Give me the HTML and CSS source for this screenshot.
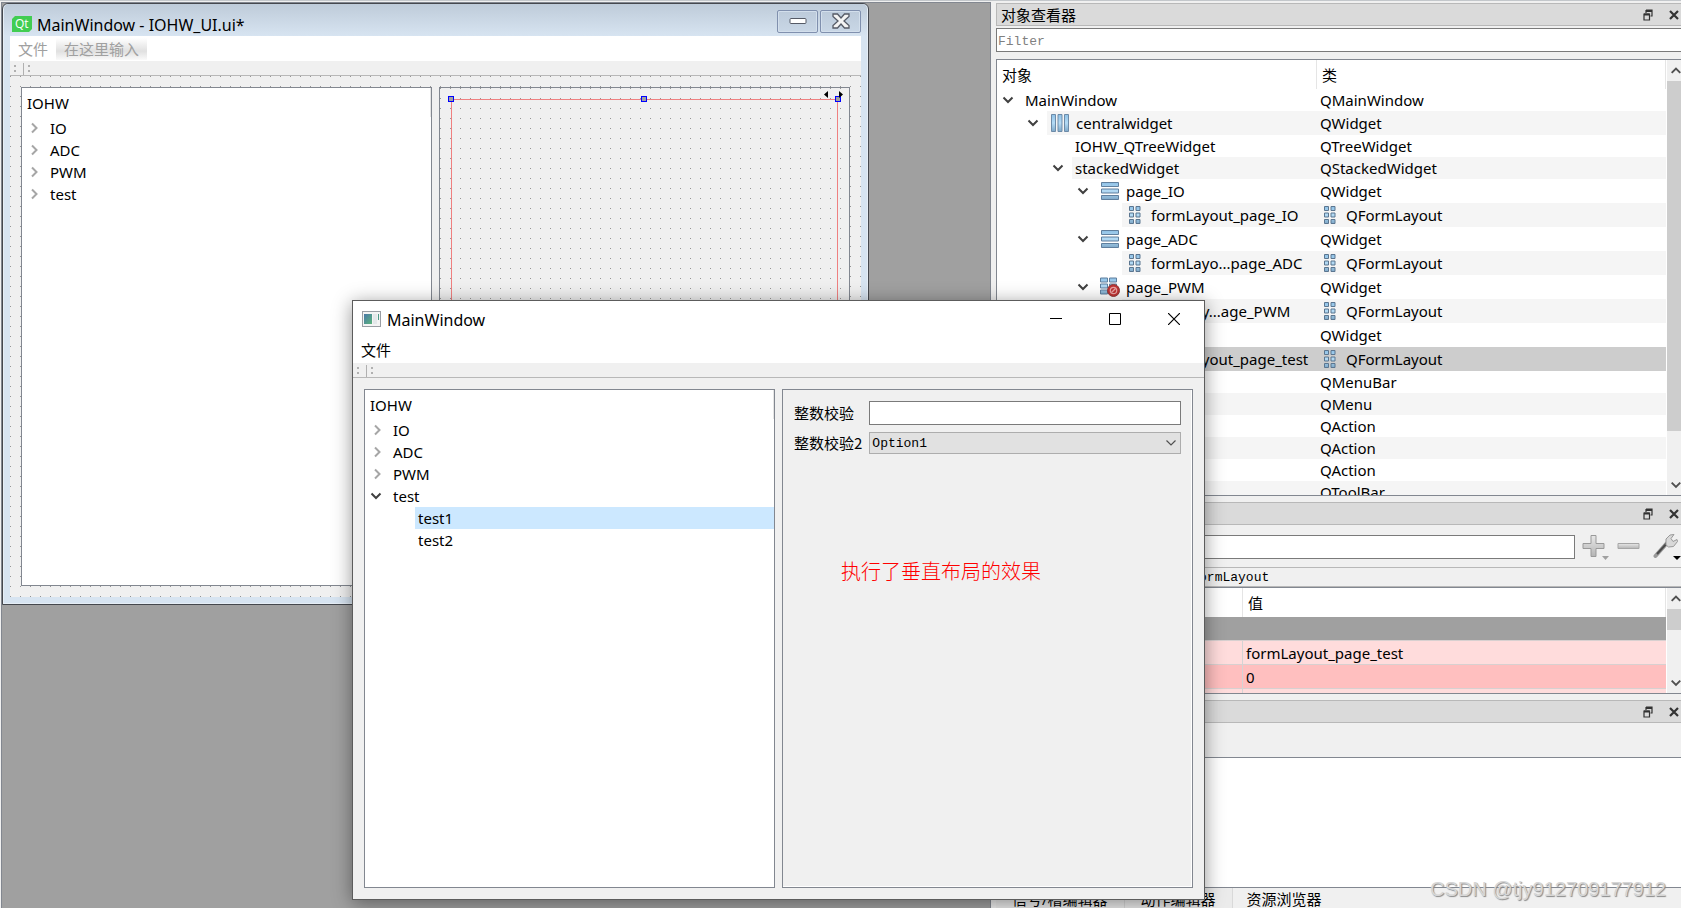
FILE: index.html
```html
<!DOCTYPE html>
<html lang="zh-CN">
<head>
<meta charset="utf-8">
<title>Qt Designer</title>
<link rel="stylesheet" href="styles.css">
</head>
<body>
<svg class="defs" aria-hidden="true">
  <defs>
    <linearGradient id="blue" x1="0" y1="0" x2="0" y2="1"><stop offset="0" stop-color="#8fc1e6"/><stop offset=".5" stop-color="#b4dbf5"/><stop offset="1" stop-color="#7fa9c9"/></linearGradient>
    <linearGradient id="metal" x1="0" y1="0" x2="0" y2="1"><stop offset="0" stop-color="#e8e8e8"/><stop offset="1" stop-color="#b4b4b4"/></linearGradient>
    <symbol id="down" viewBox="0 0 12 8"><path d="M1.5 1.5 6 6l4.500-4.500" fill="none" stroke="#404040" stroke-width="2"/></symbol>
    <symbol id="right" viewBox="0 0 8 12"><path d="M1.500 1.500 6 6l-4.500 4.500" fill="none" stroke="#a6a6a6" stroke-width="2"/></symbol>
    <symbol id="sup" viewBox="0 0 17 22"><path d="M4.500 13.500 9 9l4.500 4.500" fill="none" stroke="#505050" stroke-width="2"/></symbol>
    <symbol id="sdown" viewBox="0 0 17 22"><path d="M4.500 9 9 13.500 13.500 9" fill="none" stroke="#505050" stroke-width="2"/></symbol>
    <symbol id="float" viewBox="0 0 10 12"><path d="M3 1h6v6H7.500M3 1v3" fill="none" stroke="#333" stroke-width="1.200"/><path d="M3 1h6v2H3zM1 4.500h5.500v2H1z" fill="#333"/><path d="M1 5h5.500v6H1z" fill="none" stroke="#333" stroke-width="1.200"/></symbol>
    <symbol id="cross" viewBox="0 0 10 10"><path d="M1 1l8 8M9 1 1 9" stroke="#333" stroke-width="2.200"/></symbol>
    <symbol id="hlay" viewBox="0 0 20 20"><g fill="url(#blue)" stroke="#6d8ba8"><path d="M1.500 1.500h4v17h-4zM8 1.500h4v17H8zM14.500 1.500h4v17h-4z"/></g></symbol>
    <symbol id="vlay" viewBox="0 0 20 20"><g fill="url(#blue)" stroke="#5f7f9e"><path d="M1.500 1.500h17v4h-17zM1.500 8h17v4h-17zM1.500 14.500h17v4h-17z"/></g></symbol>
    <symbol id="form" viewBox="0 0 20 20"><g fill="url(#blue)" stroke="#5b7690"><path d="M4.500 1.500h4v4h-4zM11 1.500h4v4h-4zM4.500 8h4v4h-4zM11 8h4v4h-4zM4.500 14.500h4v4h-4zM11 14.500h4v4h-4z"/></g></symbol>
    <symbol id="broken" viewBox="0 0 20 20"><g fill="url(#blue)" stroke="#5f7f9e"><path d="M.5 1h7v4h-7zM9.500 1h7v4h-7zM.5 7h7v4h-7zM9.500 7h7v4h-7zM.5 13h7v4h-7z"/></g><circle cx="13.500" cy="13.500" r="6" fill="#c03434" stroke="#8f3b3b"/><circle cx="13.500" cy="13.500" r="3.200" fill="none" stroke="#e9a5a5" stroke-width="1.200"/><path d="m11.500 15.500 4-4" stroke="#e9a5a5" stroke-width="1.200"/></symbol>
  </defs>
</svg>

<div class="app">
  <main class="mdi">
    <section class="sub" aria-label="IOHW_UI.ui">
      <header class="sub-title">
        <svg class="qt" viewBox="0 0 20 16"><path d="M3 0h17v13l-3 3H0V3z" fill="#41cd52"/><text x="3" y="12" fill="#fff" font-size="12" font-family="Open Sans, sans-serif">Qt</text></svg>
        <h1>MainWindow - IOHW_UI.ui*</h1>
        <button class="glass" aria-label="Minimize"><svg width="18" height="8"><rect x="1" y="1.500" width="16" height="5" rx="1" fill="#fff" stroke="#555a66"/></svg></button>
        <button class="glass" aria-label="Close"><svg width="18" height="16" viewBox="0 0 18 16"><path d="M1 1h4.500L9 5l3.500-4H17v2.500L12 8l5 4.500V15h-4.500L9 11l-3.500 4H1v-2.500L6 8 1 3.500z" fill="#f4f4f4" stroke="#555a66" stroke-width="1.300"/></svg></button>
      </header>
      <div class="sub-body">
        <nav class="menubar dim"><button>文件</button><button class="type-here">在这里输入</button></nav>
        <div class="toolbar"><i class="grip"></i><i class="grip second"></i></div>
        <div class="central dots">
          <div class="tree">
            <div class="tree-head">IOHW</div>
            <ul>
              <li><svg class="br"><use href="#right"/></svg>IO</li>
              <li><svg class="br"><use href="#right"/></svg>ADC</li>
              <li><svg class="br"><use href="#right"/></svg>PWM</li>
              <li><svg class="br"><use href="#right"/></svg>test</li>
            </ul>
          </div>
          <div class="stack dots">
            <div class="layout-frame"><i class="handle l"></i><i class="handle c"></i><i class="handle r"></i>
              <svg class="pager" viewBox="0 0 19 7"><path d="M4 0v7L0 3.500zM15 0v7l4-3.500z"/></svg></div>
          </div>
        </div>
      </div>
    </section>
  </main>

  <aside class="docks">
    <section class="dock inspector">
      <header class="dock-title"><h2>对象查看器</h2><button aria-label="Float"><svg width="10" height="12"><use href="#float"/></svg></button><button aria-label="Close"><svg width="10" height="10"><use href="#cross"/></svg></button></header>
      <input class="filter" aria-label="Filter" placeholder="Filter">
      <div class="view">
        <div class="view-main">
          <table class="objects">
            <thead><tr><th>对象</th><th>类</th></tr></thead>
            <tbody>
              <tr><td><div class="node"><span class="b d0"><svg><use href="#down"/></svg></span><span class="n">MainWindow</span></div></td><td><span class="n">QMainWindow</span></td></tr>
              <tr class="big"><td><div class="node"><span class="b d1"><svg><use href="#down"/></svg></span><span class="n"><svg><use href="#hlay"/></svg>centralwidget</span></div></td><td><span class="n">QWidget</span></td></tr>
              <tr><td><div class="node"><span class="b d2"></span><span class="n">IOHW_QTreeWidget</span></div></td><td><span class="n">QTreeWidget</span></td></tr>
              <tr><td><div class="node"><span class="b d2"><svg><use href="#down"/></svg></span><span class="n">stackedWidget</span></div></td><td><span class="n">QStackedWidget</span></td></tr>
              <tr class="big"><td><div class="node"><span class="b d3"><svg><use href="#down"/></svg></span><span class="n"><svg><use href="#vlay"/></svg>page_IO</span></div></td><td><span class="n">QWidget</span></td></tr>
              <tr class="big"><td><div class="node"><span class="b d4"></span><span class="n"><svg><use href="#form"/></svg>formLayout_page_IO</span></div></td><td><span class="n"><svg><use href="#form"/></svg>QFormLayout</span></td></tr>
              <tr class="big"><td><div class="node"><span class="b d3"><svg><use href="#down"/></svg></span><span class="n"><svg><use href="#vlay"/></svg>page_ADC</span></div></td><td><span class="n">QWidget</span></td></tr>
              <tr class="big"><td><div class="node"><span class="b d4"></span><span class="n"><svg><use href="#form"/></svg>formLayo...page_ADC</span></div></td><td><span class="n"><svg><use href="#form"/></svg>QFormLayout</span></td></tr>
              <tr class="big"><td><div class="node"><span class="b d3"><svg><use href="#down"/></svg></span><span class="n"><svg><use href="#broken"/></svg>page_PWM</span></div></td><td><span class="n">QWidget</span></td></tr>
              <tr class="big"><td><div class="node"><span class="b d4"></span><span class="n"><svg><use href="#form"/></svg>formLay...age_PWM</span></div></td><td><span class="n"><svg><use href="#form"/></svg>QFormLayout</span></td></tr>
              <tr class="big"><td></td><td><span class="n">QWidget</span></td></tr>
              <tr class="big selected"><td><div class="node"><span class="b d4"></span><span class="n"><svg><use href="#form"/></svg>formLayout_page_test</span></div></td><td><span class="n"><svg><use href="#form"/></svg>QFormLayout</span></td></tr>
              <tr><td></td><td><span class="n">QMenuBar</span></td></tr>
              <tr><td><div class="node"><span class="b d2"></span><span class="n"></span></div></td><td><span class="n">QMenu</span></td></tr>
              <tr><td></td><td><span class="n">QAction</span></td></tr>
              <tr><td><div class="node"><span class="b d2"></span><span class="n"></span></div></td><td><span class="n">QAction</span></td></tr>
              <tr><td></td><td><span class="n">QAction</span></td></tr>
              <tr><td><div class="node"><span class="b d2"></span><span class="n"></span></div></td><td><span class="n">QToolBar</span></td></tr>
            </tbody>
          </table>
        </div>
        <div class="scroll"><svg><use href="#sup"/></svg><div class="track"><div class="thumb tall"></div></div><svg><use href="#sdown"/></svg></div>
      </div>
    </section>

    <section class="dock props">
      <header class="dock-title"><h2></h2><button aria-label="Float"><svg width="10" height="12"><use href="#float"/></svg></button><button aria-label="Close"><svg width="10" height="10"><use href="#cross"/></svg></button></header>
      <div class="prop-tools">
        <input class="filter closed" aria-label="Property filter">
        <button aria-label="Add"><svg width="28" height="26" viewBox="0 0 28 26"><path d="M9 1.500h5v8h8v5h-8v8H9v-8H1v-5h8z" fill="url(#metal)" stroke="#999"/><path d="M20 22h7l-3.500 4z" fill="#a0a0a0"/></svg></button>
        <button aria-label="Remove"><svg width="24" height="26" viewBox="0 0 24 26"><path d="M1 9.500h21v5H1z" fill="url(#metal)" stroke="#a6a6a6"/></svg></button>
        <button aria-label="Configure"><svg width="28" height="26" viewBox="0 0 28 26"><path d="M2.500 22 14 9" stroke="#999" stroke-width="4" stroke-linecap="round"/><path d="M4 20 14 9" stroke="#4a4a4a" stroke-width="2"/><path d="M13 11 13 5l4-4 4-.500-3 4 2 3 4-2 .500 2-4 5-5 .500z" fill="#d8d8d8" stroke="#999"/><path d="M20 22h8l-4 4z"/></svg></button>
      </div>
      <div class="prop-object">formLayout_page_test : QFormLayout</div>
      <div class="view">
        <div class="view-main">
          <table class="values">
            <thead><tr><th></th><th>值</th></tr></thead>
            <tbody>
              <tr class="group"><td colspan="2"></td></tr>
              <tr class="pale"><td></td><td>formLayout_page_test</td></tr>
              <tr class="pink"><td></td><td>0</td></tr>
              <tr class="pale"><td></td><td></td></tr>
            </tbody>
          </table>
        </div>
        <div class="scroll"><svg><use href="#sup"/></svg><div class="track"><div class="thumb short"></div></div><svg><use href="#sdown"/></svg></div>
      </div>
    </section>

    <section class="dock resources">
      <header class="dock-title"><h2></h2><button aria-label="Float"><svg width="10" height="12"><use href="#float"/></svg></button><button aria-label="Close"><svg width="10" height="10"><use href="#cross"/></svg></button></header>
      <div class="res-view"></div>
    </section>
    <nav class="tabs"><button>信号/槽编辑器</button><button>动作编辑器</button><button class="on">资源浏览器</button></nav>
  </aside>
</div>

<section class="win" aria-label="MainWindow">
  <header class="win-title">
    <svg class="appicon" viewBox="0 0 19 16"><defs><linearGradient id="ag" x1="0" y1="0" x2="1" y2="1"><stop offset="0" stop-color="#4a78a8"/><stop offset="1" stop-color="#5cb57c"/></linearGradient></defs><rect x=".5" y=".5" width="18" height="15" fill="#f4f4f4" stroke="#9a9ea4"/><rect x="2" y="3" width="8" height="10" fill="url(#ag)"/><rect x="11" y="3" width="4" height="10" fill="#e4e8ea"/><rect x="16" y="3" width="1" height="6" fill="#4f9a88"/></svg>
    <h1>MainWindow</h1>
    <button aria-label="Minimize"><svg width="12" height="12"><path d="M0 5.500h12" stroke="#000"/></svg></button>
    <button aria-label="Maximize"><svg width="12" height="12"><path d="M.5.5h11v11H.5z" fill="none" stroke="#000"/></svg></button>
    <button aria-label="Close"><svg width="12" height="12"><path d="m0 0 12 12M12 0 0 12" stroke="#000" stroke-width="1.200"/></svg></button>
  </header>
  <nav class="menubar"><button>文件</button></nav>
  <div class="toolbar"><i class="grip"></i><i class="grip second"></i></div>
  <div class="central">
    <div class="tree">
      <div class="tree-head">IOHW</div>
      <ul>
        <li><svg class="br"><use href="#right"/></svg>IO</li>
        <li><svg class="br"><use href="#right"/></svg>ADC</li>
        <li><svg class="br"><use href="#right"/></svg>PWM</li>
        <li><svg class="br open"><use href="#down"/></svg>test</li>
        <li class="child current">test1</li>
        <li class="child">test2</li>
      </ul>
    </div>
    <div class="stack page">
      <form class="form">
        <label for="v1">整数校验</label><input id="v1" type="text">
        <label for="v2">整数校验2</label>
        <div class="combo"><select id="v2"><option>Option1</option></select><svg viewBox="0 0 10 6"><path d="m.5.5 4.500 4.500L9.500.5" fill="none" stroke="#505050" stroke-width="1.200"/></svg></div>
      </form>
      <p class="note">执行了垂直布局的效果</p>
    </div>
  </div>
</section>
<div class="mark">CSDN @tjy912709177912</div>
</body>
</html>
```
FILE: styles.css
```css
* { box-sizing: border-box; }
html, body { height: 100%; }
body {
  margin: 0;
  overflow: hidden;
  background: #f0f0f0;
  color: #000;
  font: 15px/22px "Noto Sans", "Noto Sans CJK SC", sans-serif;
}
h1, h2, ul, p { margin: 0; padding: 0; font-size: inherit; font-weight: 400; }
ul { list-style: none; }
button { margin: 0; padding: 0; border: 0; background: none; color: inherit; font: inherit; }
svg { display: block; flex: none; }
.defs { position: absolute; width: 0; height: 0; }

.app { display: grid; grid-template-columns: minmax(0, 1fr) 685px; gap: 5px; height: 100%; border-top: 1px solid #c3c7cb; }

/* MDI area */
.mdi { position: relative; margin: 1px 0 0 1px; border: 1px solid #828790; border-bottom: 0; background: #a0a0a0; }
.sub {
  position: absolute; left: 0; top: 0; width: 867px; height: 602px;
  display: flex; flex-direction: column; padding: 0 7px 7px;
  border: 1px solid #45484e; border-radius: 6px 6px 0 0;
  background: #d7e4f1;
  box-shadow: inset 0 0 0 1px #e6eef6;
}
.sub-title { display: flex; align-items: center; gap: 2px; height: 32px; margin: 0 -6px; padding: 0 6px 0 7px; background: linear-gradient(#becbd9, #d7e4f1); border-radius: 5px 5px 0 0; }
.sub-title h1 { flex: 1; padding-top: 9px; font-size: 16px; }
.qt { width: 20px; height: 16px; margin: 7px 3px 0 1px; }
.glass { display: grid; place-items: center; width: 41px; height: 23px; margin-top: 2px; border: 1px solid #8090ae; border-radius: 2px; box-shadow: inset 0 0 0 1px #d3dfec; background: linear-gradient(#bccada, #c9d7e6); }
.sub-body { flex: 1; display: flex; flex-direction: column; background: #f0f0f0; }

.menubar { display: flex; align-items: center; height: 26px; padding: 0 4px; background: #fff; border-bottom: 1px solid #f0f0f0; }
.menubar button { padding: 0 4px; }
.dim { color: #a0a0a0; }
.type-here.type-here { margin-left: 4px; padding: 0 8px; background: linear-gradient(#fff, #e0e0e0 60%, #fafafa); }
.toolbar { display: flex; align-items: center; height: 14px; border-bottom: 1px solid #b8b8b8; background: #f0f0f0; }
.grip { width: 13px; height: 12px; background: linear-gradient(#b0b0b0, #b0b0b0) 4px 2px / 2px 2px no-repeat, linear-gradient(#b0b0b0, #b0b0b0) 4px 7px / 2px 2px no-repeat; }
.second { border-left: 1px solid #b0b0b0; }

.central { flex: 1; display: grid; grid-template-columns: 1fr 1fr; gap: 7px; padding: 11px; background-color: #f0f0f0; }
.dots { background: conic-gradient(from 0deg at 1px 1px, #f0f0f0 270deg, #969696 0) 0 0 / 10px 10px; }
.tree { border: 1px solid #828790; background: #fff; }
.tree-head { height: 29px; padding: 4px 5px; border-right: 1px solid #e5e5e5; }
.tree li { display: flex; align-items: center; height: 22px; padding-left: 5px; }
.br { width: 15px; height: 12px; margin-right: 8px; }
.br.open { width: 12px; height: 8px; margin-right: 11px; }
.tree .child { margin-left: 50px; padding-left: 3px; }
.tree .current { background: #cce8ff; }
.stack { border: 1px solid #828790; }
.stack.dots { padding-top: 11px; }
.layout-frame { position: relative; height: 100%; margin: 0 11px; border: 1px solid #f08080; }
.handle { position: absolute; top: -4px; width: 6px; height: 6px; background: #a0a0a0; border: 1px solid #00f; }
.l { left: -4px; } .c { left: 189px; } .r { right: -4px; }
.pager { position: absolute; right: -6px; top: -9px; width: 19px; height: 7px; }

/* Dock column */
.docks { display: flex; flex-direction: column; gap: 6px; padding-top: 2px; min-width: 0; }
.dock { display: flex; flex-direction: column; min-height: 0; }
.inspector { flex: 493 1 0; }
.props { flex: 192 1 0; }
.resources { flex: 188 1 0; }
.dock-title { display: flex; align-items: center; gap: 16px; flex: none; height: 23px; padding: 0 2px 0 4px; border: 1px solid #b8b8b8; border-right: 0; background: #dadada; }
.dock-title h2 { flex: 1; }
input, select { min-width: 0; border: 1px solid #7a7a7a; border-radius: 0; outline: 0; background: #fff; font: 13px "Liberation Mono", "Noto Sans CJK SC", monospace; }
.filter { height: 24px; padding: 2px 1px 0; border-right: 0; }
.inspector .filter { margin: 2px 0 7px; }
input::placeholder { color: #808080; opacity: 1; }
.view { flex: 1; display: flex; min-height: 0; border: solid #828790; border-width: 1px 0 1px 1px; background: #fff; }
.view-main { flex: 1; min-width: 0; overflow: hidden; }
table { width: 100%; border-collapse: separate; border-spacing: 0; table-layout: fixed; }
th { height: 29px; padding: 0 5px; border-right: 1px solid #e5e5e5; font-weight: 400; text-align: left; }
td { height: 22px; padding: 0; white-space: nowrap; overflow: hidden; }
.big td { height: 24px; }
.objects th:first-child { width: 320px; }
.node { display: flex; height: 22px; }
.n { display: flex; align-items: center; gap: 6px; flex: 1; height: 22px; padding-left: 3px; }
.big .node, .big .n { height: 24px; }
.n svg { width: 20px; height: 20px; }
.b { display: flex; align-items: center; justify-content: flex-end; flex: none; padding-right: 8px; }
.b svg { width: 12px; height: 8px; }
.d0 { width: 25px; } .d1 { width: 50px; } .d2 { width: 75px; } .d3 { width: 100px; } .d4 { width: 125px; }
tbody tr:nth-child(even) .n { background: #f5f5f5; }
tbody tr.selected, tbody tr.selected .n { background: #cdcdcd; }
.scroll { display: flex; flex-direction: column; flex: none; width: 15px; overflow: hidden; border-left: 1px solid #fff; background: #f0f0f0; }
.scroll svg { width: 17px; height: 21px; }
.track { flex: 1; }
.thumb { background: #cdcdcd; }
.tall { height: 89%; }
.short { height: 34%; }

.prop-tools { display: flex; align-items: center; height: 42px; padding: 2px 0 0 2px; }
.closed { flex: 1; border-right: 1px solid #7a7a7a; }
.prop-tools button { margin-left: 7px; }
.prop-tools button:last-child { margin: 0 0 0 12px; }
.prop-object { height: 20px; padding-left: 8px; border: solid #b8b8b8; border-width: 1px 0; font: 13px/20px "Liberation Mono", monospace; }
.values th:first-child { width: 246px; }
.values td { height: 24px; padding-left: 3px; border-right: 1px solid #d4d4d4; border-bottom: 1px solid #d8d0d0; }
.values td:last-child { border-right: 0; }
.values .group td { background: #a0a0a0; }
.pale { background: #ffdcdc; }
.pink { background: #ffbfbf; }
.res-view { flex: 1; margin-top: 34px; border: solid #828790; border-width: 1px 0 1px 1px; background: #fff; }
.tabs { display: flex; height: 20px; margin-top: -6px; overflow: hidden; }
.tabs button { padding: 0 16px; border-right: 1px solid #d9d9d9; background: #ebebeb; line-height: 22px; }
.tabs .on { padding: 0 14px; border: 0; background: #f0f0f0; }

/* Running window */
.win {
  position: absolute; left: 352px; top: 300px; width: 853px; height: 600px;
  display: flex; flex-direction: column;
  border: 1px solid #5c5c5c; background: #fff;
  box-shadow: 0 3px 18px rgba(0, 0, 0, .42);
}
.win-title { display: flex; align-items: center; height: 36px; padding: 0 24px 0 9px; }
.win-title h1 { flex: 1; padding: 1px 0 0 6px; font-size: 16px; }
.win-title button { width: 12px; height: 12px; margin-left: 47px; }
.appicon { width: 19px; height: 16px; }
.win .menubar { height: 27px; }
.page { box-shadow: inset -1px -1px #fff; padding: 11px 10px; }
.form { display: grid; grid-template-columns: auto 1fr; gap: 7px; align-items: center; padding: 0 1px; }
.form label { font: 15px/22px "Noto Sans CJK SC", sans-serif; }
.form input { height: 24px; }
.combo { display: grid; align-items: center; }
.combo select, .combo svg { grid-area: 1 / 1; }
.combo select { appearance: none; height: 22px; padding: 1px 2px 0; background: #e1e1e1; border-color: #adadad; color: #000; }
.combo svg { justify-self: end; width: 10px; height: 6px; margin-right: 5px; pointer-events: none; }
.note { padding: 105px 0 0 48px; color: #f00; font: 20px/24px "Noto Sans CJK SC", sans-serif; font-weight: 300; }
.mark { position: absolute; right: 15px; bottom: 7px; color: #d6d6d6; font: 20px/24px "Liberation Sans", sans-serif; text-shadow: 1px 1px 1px #888; }
```
